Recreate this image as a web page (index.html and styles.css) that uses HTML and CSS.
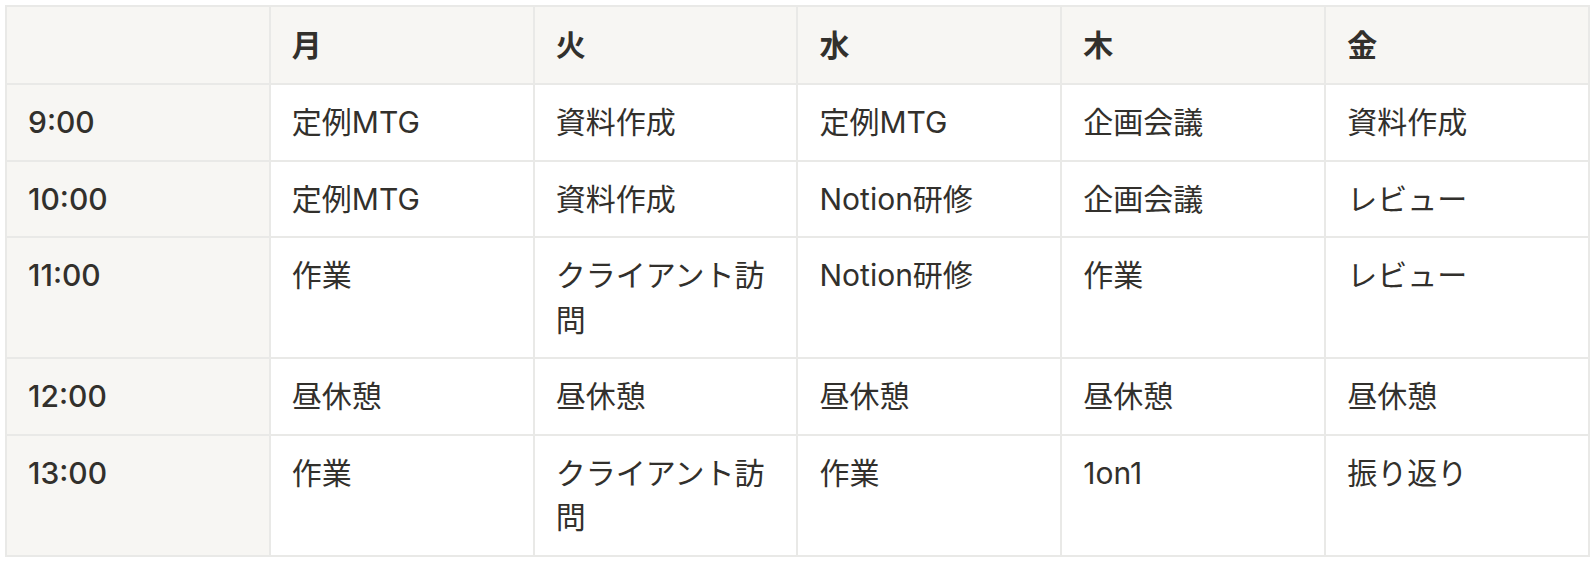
FILE: index.html
```html
<!DOCTYPE html>
<html lang="ja">
<head>
<meta charset="utf-8">
<title>週間スケジュール</title>
<link rel="stylesheet" href="styles.css">
</head>
<body>
<div class="wrap">
<table class="schedule">
  <thead>
    <tr>
      <th class="corner"></th>
      <th>月</th>
      <th>火</th>
      <th>水</th>
      <th>木</th>
      <th>金</th>
    </tr>
  </thead>
  <tbody>
    <tr>
      <th class="time">9:00</th>
      <td>定例MTG</td>
      <td>資料作成</td>
      <td>定例MTG</td>
      <td>企画会議</td>
      <td>資料作成</td>
    </tr>
    <tr>
      <th class="time">10:00</th>
      <td>定例MTG</td>
      <td>資料作成</td>
      <td>Notion研修</td>
      <td>企画会議</td>
      <td>レビュー</td>
    </tr>
    <tr>
      <th class="time">11:00</th>
      <td>作業</td>
      <td>クライアント訪問</td>
      <td>Notion研修</td>
      <td>作業</td>
      <td>レビュー</td>
    </tr>
    <tr>
      <th class="time">12:00</th>
      <td>昼休憩</td>
      <td>昼休憩</td>
      <td>昼休憩</td>
      <td>昼休憩</td>
      <td>昼休憩</td>
    </tr>
    <tr>
      <th class="time">13:00</th>
      <td>作業</td>
      <td>クライアント訪問</td>
      <td>作業</td>
      <td>1on1</td>
      <td>振り返り</td>
    </tr>
  </tbody>
</table>
</div>
</body>
</html>
```
FILE: styles.css
```css
html, body {
  margin: 0;
  padding: 0;
  background: #ffffff;
}

.wrap {
  padding: 5px;
}

.schedule {
  width: 1585px;
  table-layout: fixed;
  border-collapse: separate;
  border-spacing: 0;
  border-top: 2px solid #e9e9e7;
  border-left: 2px solid #e9e9e7;
  font-family: Inter, "Noto Sans CJK JP", sans-serif;
  font-size: 30px;
  line-height: 44.5px;
  color: rgb(50, 48, 44);
}

.schedule th,
.schedule td {
  border-right: 2px solid #e9e9e7;
  border-bottom: 2px solid #e9e9e7;
  padding: 15px 21px;
  text-align: left;
  vertical-align: top;
  font-weight: 400;
  word-break: break-all;
}

.schedule thead th {
  background: #f7f6f3;
  font-weight: 700;
  padding-top: 16px;
  padding-bottom: 15.5px;
}

.schedule .time {
  background: #f7f6f3;
  font-weight: 500;
}
```
